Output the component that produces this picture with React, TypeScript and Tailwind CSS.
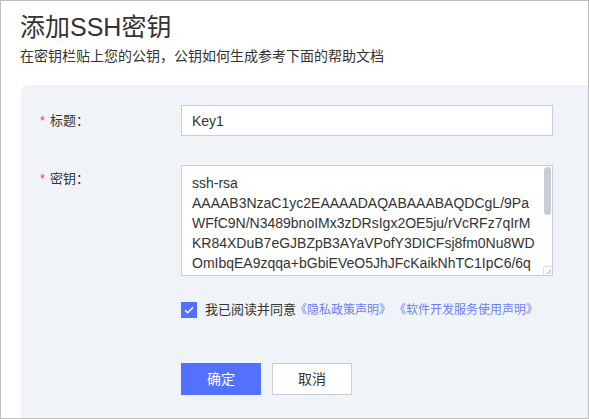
import { useState } from "react";

const keyText = [
  "ssh-rsa",
  "AAAAB3NzaC1yc2EAAAADAQABAAABAQDCgL/9Pa",
  "WFfC9N/N3489bnoIMx3zDRsIgx2OE5ju/rVcRFz7qIrM",
  "KR84XDuB7eGJBZpB3AYaVPofY3DICFsj8fm0Nu8WD",
  "OmIbqEA9zqqa+bGbiEVeO5JhJFcKaikNhTC1IpC6/6q",
  "Xr2mLhT0pVfq3k9Yc7nB1eWdJs4uGaZo8RtQiHy5M",
  "vN6cKp2LwE0sDfUbTg9xJr4aYh7iOq1ZmBnC3lVe",
  "Sd8Gk5uWjF2tXoP6yQbR0cMnHa9ELvzT4iKsJw7",
  "gU1fYq3NbDh8OrXe5pAmCk2VlZt6sWjIo0TyHn9",
  "Bx4QaLfR7dMvGc1eKu3PiNs8wYz5hJtEo2Xb6Wq",
  "lHm0Ck9rTfVa4Dg7= root@localhost",
].join("\n");

function DocLink({ text }: { text: string }) {
  return (
    <a className="text-[#6b7ef3] text-[12px] inline-flex">
      <span className="inline-block ml-[-4px]">《</span>
      {text}
      <span className="inline-block mr-[-3px]">》</span>
    </a>
  );
}

export default function App() {
  const [title, setTitle] = useState("Key1");
  const [key, setKey] = useState(keyText);
  const [agree, setAgree] = useState(true);

  return (
    <div className="w-[589px] h-[419px] border border-[#bfbfbf] bg-white flex flex-col overflow-hidden text-[#333] font-['Liberation_Sans','Noto_Sans_CJK_SC',sans-serif]">
      <div className="pl-[19px] pt-[11px]">
        <h1 className="text-[25px] leading-[30px]">添加SSH密钥</h1>
        <p className="mt-[4px] text-[14px] leading-[20px]">
          在密钥栏贴上您的公钥，公钥如何生成参考下面的帮助文档
        </p>
      </div>

      <div className="mt-[19px] ml-[20px] flex-1 bg-[#f0f4f8] rounded-tl-[6px] pt-[20px]">
        <div className="flex items-center">
          <label className="w-[160px] pl-[19px] text-[13px]">
            <span className="text-[#f0483e] mr-[5px]">*</span>标题：
          </label>
          <input
            value={title}
            onChange={(e) => setTitle(e.target.value)}
            className="w-[372px] h-[31px] border border-[#c9cdd4] bg-white px-[10px] text-[14px] outline-none"
          />
        </div>

        <div className="flex items-start mt-[29px]">
          <label className="w-[160px] pl-[19px] pt-[4px] text-[13px] leading-[20px]">
            <span className="text-[#f0483e] mr-[5px]">*</span>密钥：
          </label>
          <div className="relative w-[372px] h-[111px]">
            <textarea
              value={key}
              onChange={(e) => setKey(e.target.value)}
              className="block w-full h-full resize-none border border-[#c9cdd4] bg-white pl-[10px] pr-[12px] pt-[7px] text-[14px] leading-[20px] outline-none [scrollbar-width:none]"
            />
            {/* scrollbar thumb + resize grip */}
            <div className="absolute right-[2px] top-[2px] w-[7px] h-[48px] rounded-[4px] bg-[#c8ccd4]" />
            <div className="absolute right-[1px] bottom-[1px] w-[9px] h-[9px] border-l border-t border-[#dcdfe4] bg-white">
              <svg width="8" height="8" viewBox="0 0 8 8" className="absolute right-0 bottom-0">
                <path d="M7 3 L3 7 M7 5.5 L5.5 7" stroke="#8a8f99" strokeWidth="0.8" />
              </svg>
            </div>
          </div>
        </div>

        <div className="flex items-center ml-[160px] mt-[26px] text-[13px] leading-[16px]">
          <button
            onClick={() => setAgree(!agree)}
            className="w-[16px] h-[16px] bg-[#5470ff] flex items-center justify-center"
          >
            {agree && (
              <svg width="10" height="8" viewBox="0 0 10 8">
                <path d="M1 4.2 L3.8 6.8 L9 1.2" fill="none" stroke="white" strokeWidth="1.4" />
              </svg>
            )}
          </button>
          <span className="ml-[8px] mr-[3px]">我已阅读并同意</span>
          <DocLink text="隐私政策声明" />
          <span className="w-[10px]" />
          <DocLink text="软件开发服务使用声明" />
        </div>

        <div className="flex ml-[160px] mt-[45px] gap-[11px]">
          <button className="w-[80px] h-[32px] bg-[#5470ff] text-white text-[14px]">确定</button>
          <button className="w-[80px] h-[32px] bg-white border border-[#c9cdd4] text-[14px]">取消</button>
        </div>
      </div>
    </div>
  );
}
